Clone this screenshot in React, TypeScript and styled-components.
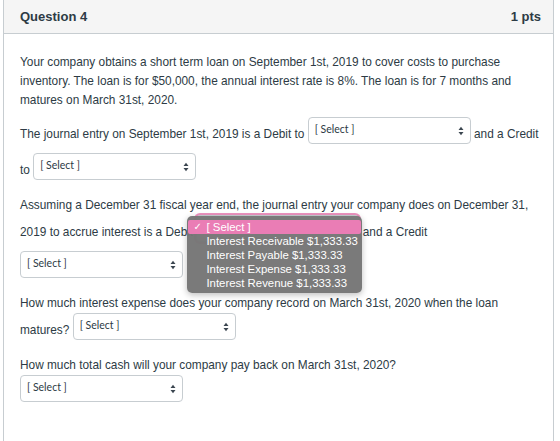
import React from "react";
import styled, { createGlobalStyle } from "styled-components";

const GlobalStyle = createGlobalStyle`
  html, body {
    margin: 0;
    padding: 0;
    background: #ffffff;
  }
  body {
    font-family: "Liberation Sans", Arial, Helvetica, sans-serif;
    color: #2d3b45;
  }
`;

const Page = styled.div`
  padding: 0 6px 0 3px;
  height: 441px;
  overflow: hidden;
`;

const Card = styled.div`
  border: 1px solid #c7cdd1;
  border-top: none;
  height: 460px;
`;

const Header = styled.div`
  display: flex;
  align-items: center;
  justify-content: space-between;
  height: 33px;
  padding: 0 12px 0 16px;
  background: #f5f5f5;
  border-bottom: 1px solid #c7cdd1;
  font-size: 13px;
  font-weight: bold;
  color: #2d3b45;
`;

const Body = styled.div`
  padding: 19px 12px 16px 16px;
  font-size: 11.85px;
  line-height: 19px;
`;

const Para = styled.p`
  margin: 0 0 7px;
`;

const SelectBox = styled.span<{ $w?: number; $focused?: boolean }>`
  position: relative;
  display: inline-flex;
  align-items: center;
  justify-content: space-between;
  box-sizing: border-box;
  width: ${(p) => p.$w ?? 163}px;
  height: 27px;
  margin: 0 0 9px;
  padding: 0 6px 3px 6px;
  vertical-align: middle;
  background: #ffffff;
  border: 1px solid #c7cdd1;
  border-radius: 4px;
  box-shadow: ${(p) =>
    p.$focused ? "0 0 0 2px rgba(233, 128, 180, 0.85)" : "none"};
  font-family: Lato, "Open Sans", sans-serif;
  font-size: 10.5px;
  line-height: 14px;
  color: #2d3b45;
`;

const Arrows = styled.svg`
  width: 6px;
  height: 10px;
  margin-top: 3px;
  flex: none;
`;

const Menu = styled.div`
  position: absolute;
  top: 0;
  left: -10px;
  z-index: 2;
  width: 175px;
  padding: 4px 0 3px;
  background: rgba(118, 118, 118, 0.97);
  border-radius: 5px;
  box-shadow: 0 2px 6px rgba(0, 0, 0, 0.25);
  font-family: "Liberation Sans", Arial, sans-serif;
  font-size: 11.4px;
`;

const MenuItem = styled.div<{ $active?: boolean }>`
  position: relative;
  height: 14px;
  line-height: 14px;
  margin: 0 1px;
  padding-left: 18px;
  border-radius: 2px;
  color: #ffffff;
  white-space: nowrap;
  background: ${(p) => (p.$active ? "#ea7db5" : "transparent")};
`;

const Check = styled.span`
  position: absolute;
  left: 5px;
  top: 0;
  font-family: "DejaVu Sans", sans-serif;
  font-size: 10px;
`;

const options = [
  "[ Select ]",
  "Interest Receivable $1,333.33",
  "Interest Payable $1,333.33",
  "Interest Expense $1,333.33",
  "Interest Revenue $1,333.33",
];

const UpDown = () => (
  <Arrows viewBox="0 0 6 10">
    <path d="M0.5 4 L3 0.8 L5.5 4 Z M0.5 6 L3 9.2 L5.5 6 Z" fill="#3b4650" />
  </Arrows>
);

interface SelectProps {
  width?: number;
  open?: boolean;
}

const Select: React.FC<SelectProps> = ({ width, open }) => (
  <SelectBox $w={width} $focused={open}>
    <span>[ Select ]</span>
    <UpDown />
    {open && (
      <Menu>
        {options.map((opt, i) => (
          <MenuItem key={opt} $active={i === 0}>
            {i === 0 && <Check>✓</Check>}
            {opt}
          </MenuItem>
        ))}
      </Menu>
    )}
  </SelectBox>
);

export default function App() {
  return (
    <>
      <GlobalStyle />
      <Page>
        <Card>
          <Header>
            <span>Question 4</span>
            <span>1 pts</span>
          </Header>
          <Body>
            <Para>
              Your company obtains a short term loan on September 1st, 2019 to
              cover costs to purchase inventory. The loan is for $50,000, the
              annual interest rate is 8%. The loan is for 7 months and matures
              on March 31st, 2020.
            </Para>
            <Para>
              The journal entry on September 1st, 2019 is a Debit to <Select />{" "}
              and a Credit to <Select />
            </Para>
            <Para>
              Assuming a December 31 fiscal year end, the journal entry your
              company does on December 31, 2019 to accrue interest is a Debit{" "}
              <Select open /> and a Credit <Select />
            </Para>
            <Para>
              How much interest expense does your company record on March 31st,
              2020 when the loan matures? <Select />
            </Para>
            <Para>
              How much total cash will your company pay back on March 31st,
              2020? <Select />
            </Para>
          </Body>
        </Card>
      </Page>
    </>
  );
}
